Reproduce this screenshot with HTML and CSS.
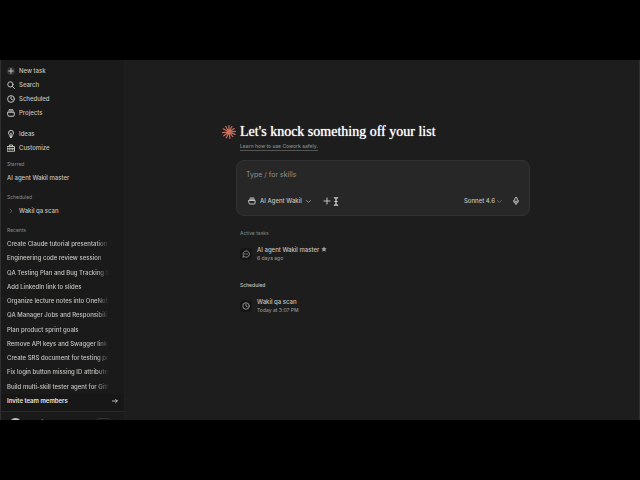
FILE: index.html
```
<!DOCTYPE html>
<html lang="en">
<head>
  <meta charset="UTF-8">
  <meta name="viewport" content="width=device-width, initial-scale=1.0">
  <title>Cowork</title>
  <link rel="stylesheet" href="styles.css">
</head>
<body>

<div class="app">
  <aside class="sidebar">
    <nav class="menu">
      <a href="#"><svg class="icon" viewBox="0 0 16 16"><circle class="disc" cx="8" cy="8" r="8"/><path d="M8 3.500v9M3.500 8h9"/></svg>New task</a>
      <a href="#"><svg class="icon" viewBox="0 0 16 16"><circle cx="6.800" cy="6.800" r="5.300"/><path d="M10.800 10.800L15 15"/></svg>Search</a>
      <a href="#"><svg class="icon" viewBox="0 0 16 16"><circle cx="8" cy="8" r="6.800"/><path d="M8 3.800V8l3 1.800"/></svg>Scheduled</a>
      <a href="#"><svg class="icon" viewBox="0 0 16 16"><path d="M4.500 1.500h7M3 4h10M1.500 6.500h13v5.500a2.500 2.500 0 0 1-2.500 2.500H4A2.500 2.500 0 0 1 1.500 12z"/></svg>Projects</a>
    </nav>
    <nav class="menu">
      <a href="#"><svg class="icon" viewBox="0 0 16 16"><path d="M5.800 11.500C5.800 9.800 3 9 3 5.800a5 5 0 0 1 10 0c0 3.200-2.800 4-2.800 5.700zM6 13.200h4M7 15h2M6.500 6L8 7.500 9.500 6M8 7.500v4"/></svg>Ideas</a>
      <a href="#"><svg class="icon" viewBox="0 0 16 16"><path d="M1 5h14v9.500H1zM5 5V2h6v3M1 9.500h14M5.500 8v3M10.500 8v3"/></svg>Customize</a>
    </nav>

    <h2>Starred</h2>
    <a class="item" href="#">AI agent Wakil master</a>

    <h2>Scheduled</h2>
    <a class="item nested" href="#"><svg class="icon chevron" viewBox="0 0 16 16"><path d="M6 4l4 4-4 4"/></svg>Wakil qa scan</a>

    <h2>Recents</h2>
    <div class="recents">
      <a class="item" href="#">Create Claude tutorial presentation</a>
      <a class="item" href="#">Engineering code review session</a>
      <a class="item" href="#">QA Testing Plan and Bug Tracking S</a>
      <a class="item" href="#">Add LinkedIn link to slides</a>
      <a class="item" href="#">Organize lecture notes into OneNot</a>
      <a class="item" href="#">QA Manager Jobs and Responsibili</a>
      <a class="item" href="#">Plan product sprint goals</a>
      <a class="item" href="#">Remove API keys and Swagger link</a>
      <a class="item" href="#">Create SRS document for testing pr</a>
      <a class="item" href="#">Fix login button missing ID attribute</a>
      <a class="item" href="#">Build multi-skill tester agent for Gith</a>
    </div>

    <a class="invite" href="#">Invite team members
      <svg class="arrow" viewBox="0 0 16 16"><path d="M1 8h13M9.500 3.500L14 8l-4.500 4.500"/></svg>
    </a>
    <div class="account">
      <span class="avatar"></span>
      <span class="name">Wakil</span>
      <span class="plan"></span>
    </div>
  </aside>

  <main>
    <div class="content">
      <header>
        <svg class="logo" viewBox="0 0 24 24"><path d="M12 12V1M12 12l5-9.500M12 12l9-6M12 12l11-1M12 12l10.500 4M12 12l6.500 8M12 12l1.500 11M12 12l-4.500 10M12 12l-9 6.500M12 12L1 13M12 12L2 6.500M12 12L6.500 2.500"/></svg>
        <h1>Let's knock something off your list</h1>
        <a href="#">Learn how to use Cowork safely.</a>
      </header>

      <form class="prompt">
        <input type="text" placeholder="Type / for skills" aria-label="Task">
        <div class="tools">
          <button type="button" class="project"><svg class="icon" viewBox="0 0 16 16"><path d="M4.500 2h7M3 4.500h10M1.800 7h12.400v5a2 2 0 0 1-2 2H3.800a2 2 0 0 1-2-2z"/></svg>AI Agent Wakil<svg class="caret" viewBox="0 0 10 10"><path d="M1 3l4 4 4-4"/></svg></button>
          <button type="button" class="add" aria-label="Add"><svg class="icon" viewBox="0 0 16 16"><path d="M8 2v12M2 8h12"/></svg></button>
          <svg class="cursor" viewBox="0 0 10 16"><path d="M2 1.500h2l1 1 1-1h2M2 14.500h2l1-1 1 1h2M5 2v12M3 8h4"/></svg>
          <button type="button" class="model">Sonnet 4.6<svg class="caret dim" viewBox="0 0 10 10"><path d="M1 3l4 4 4-4"/></svg></button>
          <button type="button" class="mic" aria-label="Dictate"><svg class="icon" viewBox="0 0 16 16"><rect x="5.500" y="1" width="5" height="9" rx="2.500"/><path d="M3 7.500a5 5 0 0 0 10 0M8 12.500V15.500"/></svg></button>
        </div>
      </form>

      <section>
        <h3>Active tasks</h3>
        <a class="task" href="#">
          <span class="badge"><svg class="icon" viewBox="0 0 16 16"><path d="M2 14l.8-3A6.300 6.300 0 1 1 5 13.500zM5 8h.5M7.800 8h.5M10.500 8h.5"/></svg></span>
          <span class="text">
            <span class="title">AI agent Wakil master <svg class="star" viewBox="0 0 16 16"><path d="M8 1l2.200 4.700 5 .6-3.700 3.500 1 5.200L8 12.400 3.500 15l1-5.200L.8 6.300l5-.6z"/></svg></span>
            <span class="when">6 days ago</span>
          </span>
        </a>
      </section>

      <section>
        <h3 class="bright">Scheduled</h3>
        <a class="task" href="#">
          <span class="badge"><svg class="icon" viewBox="0 0 16 16"><circle cx="8" cy="8" r="6.500"/><path d="M8 4v4l2.500 1.500"/></svg></span>
          <span class="text">
            <span class="title">Wakil qa scan</span>
            <span class="when">Today at 3:07 PM</span>
          </span>
        </a>
      </section>
    </div>
  </main>
</div>

</body>
</html>
```
FILE: styles.css
```
* {
  box-sizing: border-box;
}
body {
  margin: 0;
  height: 100vh;
  padding: 60px 0;
  background: #000;
  color: #c4c3bf;
  font: 500 6px/14px Inter, sans-serif;
}
a {
  color: inherit;
  text-decoration: none;
}
svg {
  fill: none;
  stroke: currentColor;
  stroke-width: 2;
  stroke-linecap: round;
  stroke-linejoin: round;
  flex: none;
}
h1, h2, h3 {
  margin: 0;
  font-weight: 400;
}
.icon {
  width: 8px;
  height: 8px;
}

.app {
  display: flex;
  height: 100%;
  overflow: hidden;
  background: #1d1d1d;
  border-left: 1px solid #303030;
  border-right: 1px solid #303030;
}

/* sidebar */
.sidebar {
  display: flex;
  flex-direction: column;
  width: 124px;
  flex: none;
  padding-top: 4px;
  background: #1a1a1a;
  border-right: 1px solid #1f1f1f;
}
.menu {
  margin-bottom: 7px;
  padding-left: 6px;
}
.menu a {
  display: flex;
  align-items: center;
  gap: 4px;
}
.menu .disc {
  fill: #333;
  stroke: none;
}
.menu + .menu {
  margin-bottom: 2px;
}
.sidebar h2 {
  padding-left: 6px;
  color: #8b8a86;
  font-size: 5px;
  line-height: 14px;
}
.item {
  display: block;
  margin: 0 15px 0 6px;
  overflow: hidden;
  white-space: nowrap;
}
.item + h2 {
  margin-top: 5px;
}
.nested {
  display: flex;
  align-items: center;
  gap: 4px;
}
.chevron {
  color: #5c5b59;
}
.recents {
  flex: 1;
  min-height: 0;
  display: grid;
  grid-auto-rows: 1fr;
}
.recents .item {
  -webkit-mask-image: linear-gradient(to right, #000 88%, transparent);
  mask-image: linear-gradient(to right, #000 88%, transparent);
}
.invite {
  display: flex;
  justify-content: space-between;
  align-items: center;
  height: 17px;
  padding: 0 6px 3px;
  background: #171717;
  color: #e6e5e1;
  font-weight: 600;
}
.arrow {
  width: 6px;
  height: 6px;
}
.account {
  display: flex;
  gap: 7px;
  height: 9px;
  padding: 6px 14px 0 8px;
  border-top: 1px solid #2a2a2a;
  overflow: hidden;
}
.avatar {
  width: 13px;
  height: 13px;
  border-radius: 50%;
  background: #c4c3bf;
}
.name {
  line-height: 10px;
}
.plan {
  width: 14px;
  height: 8px;
  margin-left: auto;
  border: 1px solid #333;
  border-radius: 3px;
}

/* main */
main {
  flex: 1;
  padding: 63px 0 0 2px;
}
.content {
  width: 90%;
  max-width: 294px;
  margin: 0 auto;
}
header {
  display: grid;
  grid-template-columns: 14px 1fr;
  column-gap: 4px;
  align-items: center;
  margin-left: -14px;
}
.logo {
  width: 14px;
  height: 14px;
  color: #d0705a;
}
h1 {
  color: #fff;
  font: 14px/18px "Liberation Serif", serif;
  text-shadow: 0 0 1px #efeeea;
}
header a {
  grid-column: 2;
  justify-self: start;
  margin-top: 1px;
  color: #8b8a86;
  font-size: 5px;
  line-height: 8px;
  border-bottom: 1px solid #555;
}
.prompt {
  height: 56px;
  margin-top: 9px;
  padding: 7px 9px;
  background: #272727;
  border: 1px solid #323232;
  border-radius: 8px;
}
.prompt input {
  display: block;
  width: 100%;
  height: 13px;
  padding: 0;
  border: 0;
  outline: 0;
  background: none;
  color: #c4c3bf;
  font: 7px/13px Inter, sans-serif;
}
.prompt input::placeholder {
  color: #92918d;
}
.tools {
  display: flex;
  align-items: center;
  margin-top: 13px;
  padding: 0 0 0 2px;
}
.tools button {
  display: flex;
  align-items: center;
  gap: 4px;
  padding: 0;
  border: 0;
  background: none;
  color: #c4c3bf;
  font: 500 6px/14px Inter, sans-serif;
}
.caret {
  width: 5px;
  height: 5px;
}
.tools .caret {
  color: #92918d;
}
.tools .dim {
  color: #666;
}
.tools .add {
  margin-left: 12px;
}
.cursor {
  width: 6px;
  height: 9px;
  margin-left: 2px;
  color: #d8d8d8;
}
.tools .model {
  gap: 2px;
  margin-left: auto;
}
.tools .mic {
  margin-left: 10px;
}
section {
  margin: 10px 4px 0;
}
section + section {
  margin-top: 15px;
}
h3 {
  color: #8b8a86;
  font-size: 5px;
  line-height: 14px;
}
.bright {
  color: #c4c3bf;
  font-weight: 500;
}
.task {
  display: flex;
  align-items: center;
  gap: 5px;
  margin-top: 5px;
}
.badge {
  display: flex;
  align-items: center;
  justify-content: center;
  width: 12px;
  height: 12px;
  border-radius: 4px;
  background: #151515;
  color: #8b8a86;
}
.text {
  line-height: 9px;
}
.title, .when {
  display: block;
}
.star {
  width: 6px;
  height: 6px;
  fill: #a5a4a0;
  stroke: none;
}
.when {
  color: #92918d;
  font-size: 5px;
}
```
